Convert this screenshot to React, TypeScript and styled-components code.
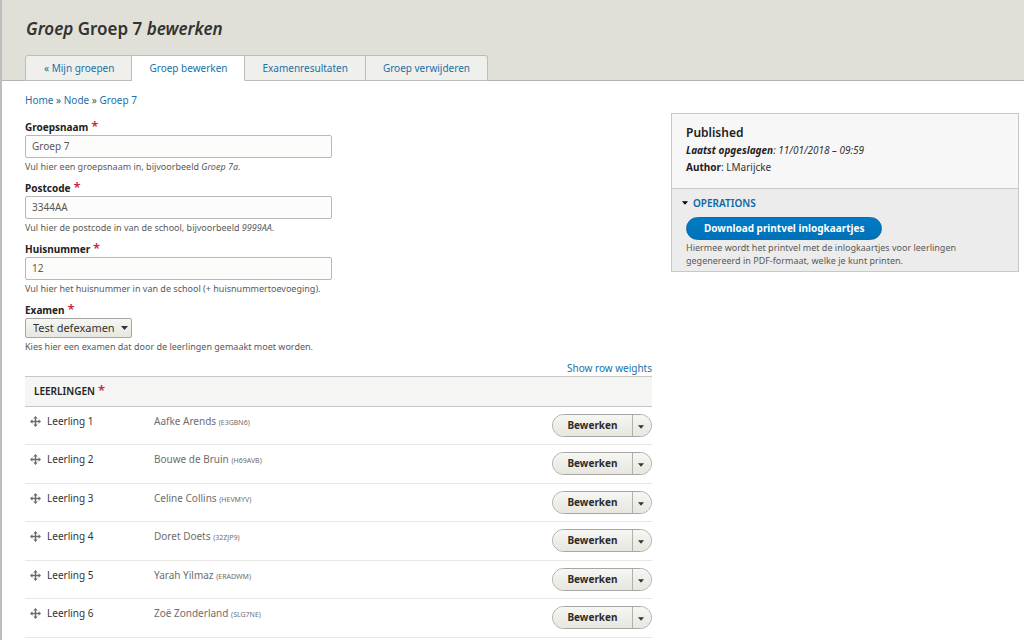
import React from 'react';
import styled, { createGlobalStyle, css } from 'styled-components';

const GlobalStyle = createGlobalStyle`
  * { box-sizing: border-box; }
  body {
    margin: 0;
    background: #fff;
    color: #333;
    font: 10px/14px "Noto Sans", "Open Sans", sans-serif;
  }
  a { color: #1b70a8; text-decoration: none; }
  button, input, select { font-family: inherit; margin: 0; }
`;

const Page = styled.div`
  min-height: 100vh;
  border-left: 2px solid #bdbdbd;
`;

const Header = styled.header`
  display: flex;
  flex-direction: column;
  justify-content: space-between;
  height: 81px;
  padding: 18px 24px 0 23px;
  background: #e0e0d8;
  border-bottom: 1px solid #b4b4b0;
`;

const Title = styled.h1`
  margin: 0;
  padding-left: 1px;
  font-size: 17px;
  line-height: 22px;
  font-weight: 600;
  color: #33332f;
`;

const Tabs = styled.nav`
  display: flex;
  margin-bottom: -1px;
`;

const Tab = styled.a<{ $active?: boolean }>`
  height: 26px;
  padding: 0 17px;
  line-height: 25px;
  background: #efefeb;
  border: 1px solid #bdbdb8;
  border-left-width: 0;
  &:first-child { padding-left: 18px; border-left-width: 1px; border-top-left-radius: 3px; }
  &:last-child { border-top-right-radius: 3px; }
  ${p => p.$active && css`
    background: #fff;
    border-bottom-color: #fff;
  `}
`;

const Breadcrumb = styled.nav`
  padding: 12px 23px 0;
  color: #555;
`;

const Columns = styled.div`
  display: grid;
  grid-template-columns: minmax(0, 627fr) minmax(0, 348fr);
  gap: 19px;
  align-items: start;
  padding: 6px 5px 0 23px;
`;

const Form = styled.form`
  display: flex;
  flex-direction: column;
  padding-top: 7px;
`;

const Field = styled.div`
  display: flex;
  flex-direction: column;
  align-items: flex-start;
  margin-bottom: 8px;
`;

const Label = styled.label`
  height: 15px;
  line-height: 14px;
  font-weight: 700;
  color: #222;
`;

const Star = styled.span`
  margin-left: 3px;
  font-size: 13px;
  line-height: 10px;
  font-weight: 600;
  color: #c8283c;
`;

const TextInput = styled.input`
  width: 49%;
  height: 23px;
  padding: 0 6px 2px;
  border: 1px solid #b8b8b8;
  border-radius: 2px;
  background: #fcfcfa;
  font-size: 10px;
  color: #595959;
`;

const Description = styled.p`
  margin: 0;
  padding-top: 2px;
  font-size: 9px;
  line-height: 13px;
  color: #595959;
`;

const SelectBox = styled.div`
  position: relative;
  svg { position: absolute; right: 4px; top: 8px; pointer-events: none; }
`;

const Select = styled.select`
  appearance: none;
  display: block;
  height: 20px;
  padding: 0 16px 1px 7px;
  border: 1px solid #a6a6a6;
  border-radius: 2px;
  background: linear-gradient(#f6f6f3, #e7e7df);
  font-size: 11px;
  color: #333;
`;

const WeightsLink = styled.a`
  align-self: flex-end;
  margin-bottom: 1px;
`;

const Table = styled.table`
  width: 100%;
  border-collapse: separate;
  border-spacing: 0;
`;

const HeadCell = styled.th`
  height: 31px;
  padding: 0 9px 2px;
  text-align: left;
  font-size: 10px;
  font-weight: 600;
  color: #222;
  background: #f5f5f3;
  border-top: 1px solid #c6c6c3;
  border-bottom: 1px solid #c6c6c3;
`;

const Row = styled.tr`
  height: 38px;
  &:nth-child(even) { height: 39px; }
`;

const Cell = styled.td<{ $width?: string }>`
  width: ${p => p.$width ?? 'auto'};
  padding: 7px 0 0;
  vertical-align: top;
  border-bottom: 1px solid #e8e7e4;
  color: #6e6e6e;
`;

const Handle = styled.span`
  display: flex;
  align-items: center;
  gap: 6px;
  padding-left: 5px;
  color: #333;
`;

const Code = styled.small`
  font-size: 7px;
`;

const DropButton = styled.div`
  display: flex;
  width: 100px;
  height: 23px;
  margin: 0 0 0 auto;
  border: 1px solid #a6a6a6;
  border-radius: 12px;
  overflow: hidden;
`;

const DropPart = styled.button<{ $toggle?: boolean }>`
  display: flex;
  align-items: center;
  justify-content: center;
  flex: ${p => (p.$toggle ? '0 0 19px' : '1')};
  padding: ${p => (p.$toggle ? '2px 2px 0 0' : '0 0 2px')};
  border: 0;
  border-left: ${p => (p.$toggle ? '1px solid #b0b0ac' : '0')};
  background: linear-gradient(#f6f6f3, #e7e7df);
  font-size: 10px;
  font-weight: 700;
  color: #2b2b2b;
`;

const Sidebar = styled.aside`
  border: 1px solid #c8c8c8;
  background: #ececec;
`;

const Meta = styled.section`
  height: 75px;
  padding: 10px 14px 0;
  background: #f7f7f7;
  border-bottom: 1px solid #c8c8c8;
  line-height: 17px;
  h2 { margin: 0; font-size: 12px; line-height: 18px; font-weight: 600; color: #222; }
  p { margin: 0; }
  b { color: #222; }
`;

const Operations = styled.details`
  padding: 7px 14px 4px;
`;

const Summary = styled.summary`
  display: flex;
  align-items: center;
  gap: 5px;
  margin-left: -4px;
  height: 14px;
  list-style: none;
  font-weight: 600;
  color: #0e66a5;
`;

const Primary = styled.button`
  display: block;
  height: 23px;
  margin-top: 7px;
  padding: 0 17px 2px;
  border: 1px solid #0a6cae;
  border-radius: 12px;
  background: linear-gradient(#007bc6, #0071b8);
  font-size: 10px;
  font-weight: 700;
  color: #fff;
`;

const Help = styled(Description)`
  padding-top: 1px;
`;

const Arrow = ({ color = '#333', width = 7 }: { color?: string; width?: number }) => (
  <svg width={width} height="4" viewBox="0 0 7 4" aria-hidden="true">
    <path d="M0 0h7L3.5 4z" fill={color} />
  </svg>
);

const MoveIcon = () => (
  <svg width="11" height="11" viewBox="0 0 11 11" aria-hidden="true">
    <path
      fill="#6b6b6b"
      d="M5.5 0 7.7 2.4H6.2V4.8H8.6V3.3L11 5.5 8.6 7.7V6.2H6.2V8.6H7.7L5.5 11 3.3 8.6H4.8V6.2H2.4V7.7L0 5.5 2.4 3.3V4.8H4.8V2.4H3.3z"
    />
  </svg>
);

const pupils = [
  ['Aafke Arends', 'E3GBN6'],
  ['Bouwe de Bruin', 'H69AVB'],
  ['Celine Collins', 'HEVMYV'],
  ['Doret Doets', '32ZJP9'],
  ['Yarah Yilmaz', 'ERADWM'],
  ['Zoë Zonderland', 'SLG7NE'],
];

const fields = [
  { id: 'naam', label: 'Groepsnaam', value: 'Groep 7', help: <>Vul hier een groepsnaam in, bijvoorbeeld <em>Groep 7a</em>.</> },
  { id: 'postcode', label: 'Postcode', value: '3344AA', help: <>Vul hier de postcode in van de school, bijvoorbeeld <em>9999AA</em>.</> },
  { id: 'huisnummer', label: 'Huisnummer', value: '12', help: <>Vul hier het huisnummer in van de school (+ huisnummertoevoeging).</> },
];

export default function App() {
  return (
    <Page>
      <GlobalStyle />
      <Header>
        <Title><em>Groep</em> Groep 7 <em>bewerken</em></Title>
        <Tabs>
          <Tab href="#groepen">« Mijn groepen</Tab>
          <Tab href="#bewerken" $active>Groep bewerken</Tab>
          <Tab href="#resultaten">Examenresultaten</Tab>
          <Tab href="#verwijderen">Groep verwijderen</Tab>
        </Tabs>
      </Header>
      <Breadcrumb>
        <a href="#home">Home</a> » <a href="#node">Node</a> » <a href="#groep">Groep 7</a>
      </Breadcrumb>
      <Columns>
        <Form>
          {fields.map(f => (
            <Field key={f.id}>
              <Label htmlFor={f.id}>{f.label}<Star>*</Star></Label>
              <TextInput id={f.id} defaultValue={f.value} />
              <Description>{f.help}</Description>
            </Field>
          ))}
          <Field>
            <Label htmlFor="examen">Examen<Star>*</Star></Label>
            <SelectBox>
              <Select id="examen"><option>Test defexamen</option></Select>
              <Arrow />
            </SelectBox>
            <Description>Kies hier een examen dat door de leerlingen gemaakt moet worden.</Description>
          </Field>
          <WeightsLink href="#weights">Show row weights</WeightsLink>
          <Table>
            <thead>
              <tr><HeadCell colSpan={3}>LEERLINGEN<Star>*</Star></HeadCell></tr>
            </thead>
            <tbody>
              {pupils.map(([name, code], i) => (
                <Row key={code}>
                  <Cell $width="129px"><Handle><MoveIcon />Leerling {i + 1}</Handle></Cell>
                  <Cell>{name} <Code>({code})</Code></Cell>
                  <Cell $width="100px">
                    <DropButton>
                      <DropPart type="button">Bewerken</DropPart>
                      <DropPart type="button" $toggle aria-label="Meer acties"><Arrow width={6} /></DropPart>
                    </DropButton>
                  </Cell>
                </Row>
              ))}
            </tbody>
          </Table>
        </Form>
        <Sidebar>
          <Meta>
            <h2>Published</h2>
            <p><em><b>Laatst opgeslagen</b>: 11/01/2018 – 09:59</em></p>
            <p><b>Author</b>: LMarijcke</p>
          </Meta>
          <Operations open>
            <Summary><Arrow color="#000" width={6} />OPERATIONS</Summary>
            <Primary type="button">Download printvel inlogkaartjes</Primary>
            <Help>
              Hiermee wordt het printvel met de inlogkaartjes voor leerlingen gegenereerd in PDF-formaat, welke je kunt printen.
            </Help>
          </Operations>
        </Sidebar>
      </Columns>
    </Page>
  );
}
